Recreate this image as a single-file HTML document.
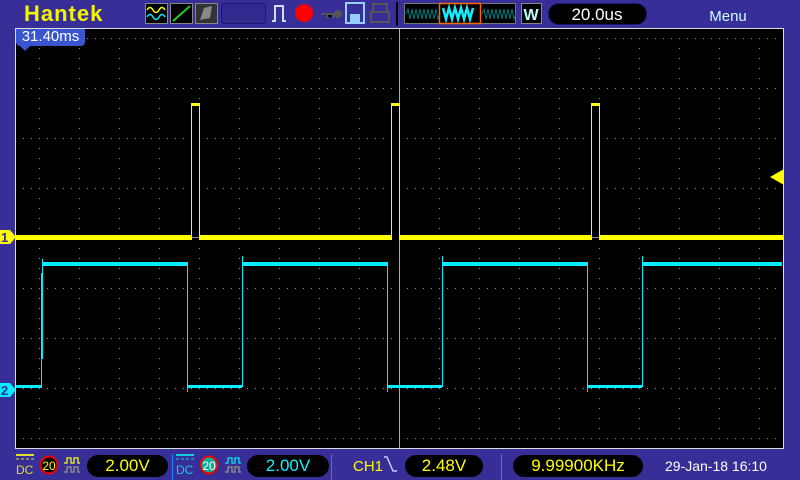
<!DOCTYPE html>
<html><head><meta charset="utf-8"><style>
body{margin:0;width:800px;height:480px;overflow:hidden;background:#372f97;font-family:"Liberation Sans",sans-serif;position:relative}
.a{position:absolute}
.pill{position:absolute;background:#000;border-radius:12px;height:22px;font-size:17px;text-align:center;line-height:22px}
</style></head><body>
<div class="a" style="left:24px;top:1px;font-size:22px;font-weight:bold;color:#f5f500;letter-spacing:1px">Hantek</div>
<svg class="a" style="left:0;top:0" width="800" height="28">
<rect x="145.5" y="3.5" width="22" height="20" fill="#000" stroke="#888"/>
<path d="M147 10q3-5 6 0t6 0t6 0" stroke="#ff0" fill="none" stroke-width="1.5"/>
<path d="M147 17q3-5 6 0t6 0t6 0" stroke="#0ef" fill="none" stroke-width="1.5"/>
<rect x="170.5" y="3.5" width="22" height="20" fill="#000" stroke="#888"/>
<path d="M173 21L190 6" stroke="#2c2" stroke-width="2"/>
<rect x="195.5" y="3.5" width="22" height="20" fill="#333" stroke="#888"/>
<path d="M200 20l4-12l8-2l-2 12z" fill="#888"/>
<rect x="221.5" y="3.5" width="44" height="20" rx="3" fill="#302a8f" stroke="#1a1870"/>
<path d="M272 21h3v-15h8v15h3" stroke="#cdf" fill="none" stroke-width="2"/>
<circle cx="304" cy="13" r="9" fill="#f00"/>
<path d="M321 14h12v4M327 14v4" stroke="#555" stroke-width="2"/><circle cx="338" cy="14" r="4" fill="#555"/>
<rect x="346" y="3" width="18" height="20" fill="none" stroke="#9cf" stroke-width="2"/><rect x="350" y="14" width="10" height="8" fill="#9cf"/>
<rect x="373" y="4" width="14" height="8" fill="none" stroke="#555" stroke-width="2"/><rect x="371" y="12" width="18" height="10" fill="none" stroke="#555" stroke-width="2"/>
<rect x="396" y="2" width="2" height="24" fill="#000"/>
<rect x="404.5" y="3.5" width="111" height="20" fill="#000" stroke="#777"/>
<path d="M406 14l2-5l2 10l2-10l2 10l2-10l2 10l2-10l2 10l2-10l2 10l2-10l2 10l2-10l2 10l2-10l2 10l2-5" stroke="#077" fill="none"/>
<path d="M482 14l2-5l2 10l2-10l2 10l2-10l2 10l2-10l2 10l2-10l2 10l2-10l2 10l2-10l2 10l2-10l2 10l2-5" stroke="#077" fill="none"/>
<rect x="439.5" y="3.5" width="41" height="20" fill="#000" stroke="#f60" stroke-width="1.5"/>
<path d="M443 8l3 11l3-11l3 11l3-11l3 11l3-11l3 11l3-11l3 11l3-11" stroke="#1ef" fill="none" stroke-width="2.5"/>
<rect x="521.5" y="3.5" width="20" height="20" fill="#000" stroke="#888"/>
<text x="531" y="20" font-size="16" font-weight="bold" fill="#bff" text-anchor="middle" font-family="Liberation Sans">W</text>
<rect x="548.5" y="3.5" width="98" height="21" rx="10" fill="#000" stroke="#1a1870"/>
<text x="597" y="20" font-size="17" fill="#fff" text-anchor="middle" font-family="Liberation Sans">20.0us</text>
<text x="728" y="21" font-size="15" fill="#cff" text-anchor="middle" font-family="Liberation Sans">Menu</text>
</svg>
<svg class="a" style="left:0;top:28px" width="800" height="424">
<defs>
<pattern id="col" x="39" y="0" width="40" height="10" patternUnits="userSpaceOnUse"><rect x="0" y="0" width="1" height="1" fill="#999"/></pattern>
<pattern id="row" x="7" y="10" width="8" height="50" patternUnits="userSpaceOnUse"><rect x="0" y="0" width="1" height="1" fill="#999"/></pattern>
</defs>
<rect x="15" y="0" width="769" height="421" fill="#000"/>
<rect x="16" y="0" width="767" height="420" fill="url(#col)"/>
<rect x="16" y="0" width="767" height="420" fill="url(#row)"/>
<rect x="399" y="0" width="1" height="420" fill="#aaa"/>
<rect x="15" y="0" width="1" height="420" fill="#ddd"/>
<rect x="15" y="0" width="769" height="1" fill="#ddd"/>
<rect x="783" y="0" width="1" height="420" fill="#ddd"/>
<rect x="15" y="420" width="769" height="1" fill="#ddd"/>
<g fill="#ff0">
<rect x="16" y="207" width="767" height="5"/>
<rect x="191" y="76" width="1" height="134"/><rect x="199" y="76" width="1" height="134"/><rect x="191" y="75" width="9" height="3"/>
<rect x="391" y="76" width="1" height="134"/><rect x="399" y="76" width="1" height="134"/><rect x="391" y="75" width="9" height="3"/>
<rect x="591" y="76" width="1" height="134"/><rect x="599" y="76" width="1" height="134"/><rect x="591" y="75" width="9" height="3"/>
<path d="M770 149l14-8v16z"/>
</g>
<g fill="#000"><rect x="192" y="205" width="7" height="9"/><rect x="392" y="205" width="7" height="9"/><rect x="592" y="205" width="7" height="9"/></g>
<rect x="192" y="209" width="7" height="1" fill="#888"/><rect x="592" y="209" width="7" height="1" fill="#888"/>
<g fill="#0ef">
<rect x="16" y="357" width="26" height="3"/>
<rect x="41" y="245" width="1" height="113"/><rect x="42" y="231" width="1" height="100"/>
<rect x="42" y="234" width="145" height="4"/><rect x="187" y="234" width="1" height="130"/>
<rect x="187" y="357" width="55" height="3"/><rect x="242" y="228" width="1" height="131"/>
<rect x="242" y="234" width="145" height="4"/><rect x="387" y="234" width="1" height="130"/>
<rect x="387" y="357" width="55" height="3"/><rect x="442" y="228" width="1" height="131"/>
<rect x="442" y="234" width="145" height="4"/><rect x="587" y="234" width="1" height="130"/>
<rect x="587" y="357" width="55" height="3"/><rect x="642" y="228" width="1" height="131"/>
<rect x="642" y="234" width="140" height="4"/>
</g>
<path d="M0 202h10l6 7l-6 7h-10z" fill="#ff0"/><text x="1" y="214" font-size="13" font-weight="bold" fill="#372f97" font-family="Liberation Sans">1</text>
<path d="M0 355h10l6 7l-6 7h-10z" fill="#0ef"/><text x="1" y="367" font-size="13" font-weight="bold" fill="#372f97" font-family="Liberation Sans">2</text>
</svg>
<div class="a" style="left:16px;top:29px;width:69px;height:17px;background:#3a55d0;border-radius:0 0 4px 4px;color:#fff;font-size:15px;line-height:16px;text-align:center">31.40ms</div>
<div class="a" style="left:20px;top:46px;width:0;height:0;border-left:5px solid transparent;border-right:5px solid transparent;border-top:5px solid #3a55d0"></div>
<svg class="a" style="left:0;top:452px" width="800" height="28">
<rect x="16" y="2" width="18" height="2" fill="#dd3"/><path d="M16 7h18" stroke="#dd3" stroke-dasharray="3 2"/>
<text x="16" y="22" font-size="12" fill="#dd3" font-family="Liberation Sans">DC</text>
<circle cx="49" cy="13" r="8.5" fill="#000" stroke="#e00" stroke-width="2"/><text x="49" y="18" font-size="12" fill="#ff0" text-anchor="middle" font-family="Liberation Sans">20</text>
<path d="M64 11h3v-5h4v5h3v-5h4v5h2" stroke="#dd3" fill="none" stroke-width="1.5"/><path d="M64 20h3v-5h4v5h3v-5h4v5h2" stroke="#888" fill="none" stroke-width="1.5"/>
<rect x="172" y="2" width="1" height="26" fill="#18f"/>
<rect x="176" y="2" width="18" height="2" fill="#1cd"/><path d="M176 7h18" stroke="#1cd" stroke-dasharray="3 2"/>
<text x="176" y="22" font-size="12" fill="#1cd" font-family="Liberation Sans">DC</text>
<circle cx="209" cy="13" r="8.5" fill="#1a9" stroke="#e00" stroke-width="2"/><text x="209" y="18" font-size="12" fill="#fff" text-anchor="middle" font-family="Liberation Sans">20</text>
<path d="M225 11h3v-5h4v5h3v-5h4v5h2" stroke="#1cd" fill="none" stroke-width="1.5"/><path d="M225 20h3v-5h4v5h3v-5h4v5h2" stroke="#888" fill="none" stroke-width="1.5"/>
<rect x="331" y="2" width="1" height="26" fill="#18f"/>
<text x="353" y="19" font-size="15" fill="#ff0" font-family="Liberation Sans">CH1</text>
<path d="M384 5h3l6 14h4" stroke="#ccf" fill="none" stroke-width="1.5"/>
<rect x="501" y="2" width="1" height="26" fill="#18f"/>
<text x="665" y="19" font-size="14" fill="#fff" font-family="Liberation Sans">29-Jan-18 16:10</text>
</svg>
<div class="pill" style="left:87px;top:455px;width:81px;color:#ff0">2.00V</div>
<div class="pill" style="left:247px;top:455px;width:82px;color:#1ef">2.00V</div>
<div class="pill" style="left:405px;top:455px;width:78px;color:#ff0">2.48V</div>
<div class="pill" style="left:513px;top:455px;width:130px;color:#ff0">9.99900KHz</div>
</body></html>
